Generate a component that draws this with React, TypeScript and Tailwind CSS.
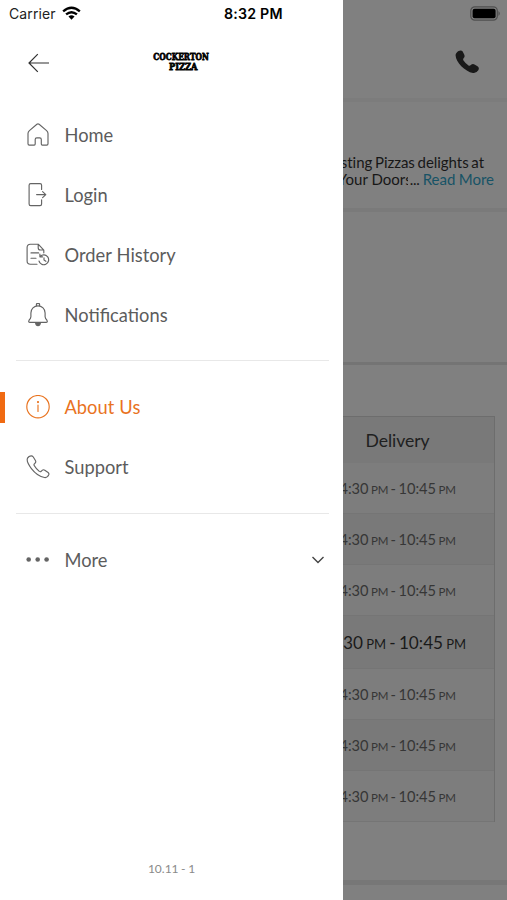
import type { ReactNode } from "react";

function Icon({ children, className = "" }: { children: ReactNode; className?: string }) {
  return (
    <svg
      viewBox="0 0 24 24"
      className={`h-6 w-6 shrink-0 ${className}`}
      fill="none"
      stroke="currentColor"
      strokeWidth="1.15"
      strokeLinecap="round"
      strokeLinejoin="round"
    >
      {children}
    </svg>
  );
}

const HomeIcon = (
  <Icon>
    <path d="M3.4 7.600 10.900 1.300q1.100-.9 2.200 0l7.500 6.300q1.400 1.200 1.400 3V20.800q0 1.300-1.300 1.300H16.300q-1 0-1-1V16.500q0-1.600-1.600-1.600H10.800q-1.600 0-1.600 1.600v4.600q0 1-1 1H3.300Q2 22.100 2 20.800V10.600q0-1.800 1.400-3Z" />
  </Icon>
);
const LoginIcon = (
  <Icon>
    <path d="M15.600 6.500V2.200q0-1.600-1.600-1.600H4.700Q3.100.6 3.100 2.200v18.800q0 1.600 1.600 1.600H14q1.600 0 1.600-1.600v-4.300M10.600 11.600h9M16.600 8.600l3.200 3-3.200 3" />
  </Icon>
);
const OrderIcon = (
  <Icon>
    <path d="M11 21.200H4.400Q1.100 21.200 1.100 17.900V4.500Q1.100 1.200 4.400 1.200h7.800l5.600 6v2.600M12.200 1.200v3.500q0 2.300 2.200 2.300h3.400M5 9.900h7.600M5 15.200h5" />
    <path d="M14.200 13.400a4.900 4.900 0 1 1-1.200 4.600M13.900 11.100v2.700h2.700M18 14.800v2.300l1.900 1.200" />
  </Icon>
);
const BellIcon = (
  <Icon>
    <path d="M10.400 2.700V1.600Q10.400.3 12 .3t1.600 1.300v1.100M4.900 13.700V9.900a7.100 7.100 0 0 1 14.200 0v3.800q.2 1.800 1.700 3.300 1.300 2.300-.8 2.300H4q-2.100 0-.8-2.300 1.500-1.500 1.700-3.300Z" />
    <path d="M9.600 19.900h4.800q-.4 2.700-2.400 2.700t-2.400-2.700Z" fill="currentColor" />
  </Icon>
);
const InfoIcon = (
  <Icon>
    <circle cx="12" cy="11.700" r="11.200" />
    <path d="M12 10v6.500" />
    <circle cx="12" cy="7.100" r=".5" fill="currentColor" />
  </Icon>
);
const SupportIcon = (
  <Icon>
    <path d="M3.100 1.500 1.600 3C-.5 7.100 8.200 20.500 18.500 22.500q1.700.3 2.900-.9l1-1.100q1.200-1.600-.3-3l-3.300-2.300q-1.400-1-2.700.2l-.9.900q-.9.800-1.900.1C10.900 14.300 9.300 12.500 8.200 10.500q-.6-1.100.3-1.800l.5-.5q1.300-1.100.4-2.700L7.300 2q-1.600-2.100-4.200-.5Z" />
  </Icon>
);
const MoreIcon = (
  <Icon>
    <g fill="currentColor" stroke="none">
      <circle cx="2.700" cy="11.500" r="2.300" />
      <circle cx="11.700" cy="11.500" r="2.300" />
      <circle cx="20.600" cy="11.500" r="2.300" />
    </g>
  </Icon>
);

function MenuItem({ icon, label, active, trailing }: { icon: ReactNode; label: string; active?: boolean; trailing?: ReactNode }) {
  return (
    <li className={`flex h-[60px] items-center ${active ? "text-[#e9731f]" : "text-[#5c5c5c]"}`}>
      <span className={`h-[31px] w-[5px] shrink-0 ${active ? "bg-[#f06a12]" : ""}`} />
      <span className={`ml-[21px] flex ${active ? "" : "text-[#646464]"}`}>{icon}</span>
      <span className="ml-[14.5px] text-[18.3px] leading-6 [word-spacing:0.5px]">{label}</span>
      {trailing}
    </li>
  );
}

function Drawer() {
  return (
    <aside className="flex h-full w-[343px] shrink-0 flex-col bg-white">
      <div className="flex h-7 items-center pl-[9px] font-['Inter'] text-[#222]">
        <span className="mb-px w-[48px] text-[14px] leading-[26px] tracking-[0.1px]">Carrier</span>
        <svg viewBox="0 0 20 14" className="mb-[2px] ml-[5px] h-[14px] w-[19px]" fill="none" stroke="#000" strokeWidth="2.500">
          <path d="M1.200 5.200Q10-2.200 18.800 5.200M4.300 8.500q5.700-4.800 11.400 0" />
          <path d="M6.800 10.800Q10 8 13.200 10.800L10 14Z" fill="#000" stroke="none" />
        </svg>
        <span className="mb-px ml-[143px] whitespace-nowrap text-[14.200px] font-semibold tracking-[0.200px] text-black">8:32 PM</span>
      </div>
      <header className="flex h-[77px] pt-[22px]">
        <svg viewBox="0 0 22 20" className="ml-7 mt-[3px] h-5 w-[22px]" fill="none" stroke="#303030" strokeWidth="1.200">
          <path d="M21 10H1M9.800 1.200 1 10l8.800 8.800" />
        </svg>
        <svg viewBox="0 0 60 26" className="-mt-0.5 ml-[101px] h-[26px] w-[60px] overflow-visible font-['DejaVu_Serif']" fontWeight="700" fontSize="9.800" stroke="#000" strokeWidth=".8">
          <text x="2.300" y="11.700" textLength="55.500" lengthAdjust="spacingAndGlyphs">COCKERTON</text>
          <text x="18" y="21.700" textLength="28.500" lengthAdjust="spacingAndGlyphs">PIZZA</text>
        </svg>
      </header>
      <ul>
        <MenuItem icon={HomeIcon} label="Home" />
        <MenuItem icon={LoginIcon} label="Login" />
        <MenuItem icon={OrderIcon} label="Order History" />
        <MenuItem icon={BellIcon} label="Notifications" />
      </ul>
      <hr className="ml-4 mr-[14px] mt-[15px] border-[#e8e8e8]" />
      <ul className="mt-4">
        <MenuItem icon={InfoIcon} label="About Us" active />
        <MenuItem icon={SupportIcon} label="Support" />
      </ul>
      <hr className="ml-4 mr-[14px] mt-4 border-[#e8e8e8]" />
      <ul className="mt-4">
        <MenuItem
          icon={MoreIcon}
          label="More"
          trailing={
            <svg viewBox="0 0 14 8" className="ml-auto mr-[18px] h-2 w-[14px]" fill="none" stroke="#444" strokeWidth="1.400">
              <path d="m1.500 1 5.500 5.500L12.500 1" />
            </svg>
          }
        />
      </ul>
      <footer className="mb-[22px] mt-auto text-center text-[12px] leading-[18px] text-[#8a8a8a] [word-spacing:-0.5px]">10.11 - 1</footer>
    </aside>
  );
}

function Hours({ today, striped }: { today?: boolean; striped?: boolean }) {
  const suffix = today ? "text-[13px]" : "text-[11.5px] tracking-[-0.3px]";
  return (
    <div
      className={`flex items-center justify-center whitespace-nowrap border-b border-[#757575] pt-[2px] ${
        today ? "h-[53px] text-[17.2px] text-[#191919] [word-spacing:-1.2px]" : "h-[51px] text-[14.6px] text-[#363636] [word-spacing:-1.2px]"
      } ${striped ? "bg-[#797979]" : "bg-[#7d7d7d]"}`}
    >
      <span>
        4:30 <span className={suffix}>PM</span> - 10:45 <span className={suffix}>PM</span>
      </span>
    </div>
  );
}

function StorePage() {
  return (
    <main className="flex h-full min-w-0 flex-1 flex-col overflow-hidden bg-[#808080]">
      <div className="flex h-7 items-center justify-end pr-1.5">
        <svg viewBox="0 0 31 15" className="mb-[2px] h-[15px] w-[31px]">
          <rect x=".8" y=".8" width="26.500" height="13.400" rx="4" fill="none" stroke="#4f4f4f" strokeWidth="1.200" />
          <rect x="2.600" y="2.700" width="23" height="9.600" rx="2" fill="#000" />
          <path d="M28.500 5q2.500 2.500 0 5Z" fill="#4b4b4b" />
        </svg>
      </div>
      <div className="flex h-[70px] justify-end pr-7 pt-[22px]">
        <svg viewBox="0 0 24 24" className="h-6 w-6" fill="#191919">
          <path d="M1.400 3C4-.1 6.600.2 7.700 1.600l1.600 3.200q.8 2-.6 3.300-1 1.200-.2 2.500 2.200 3.300 5 4.900 1.300.6 2.300-.4 1.700-1.700 3.700-.7l3 1.800q2.200 1.700.8 4-2.200 3.300-5.300 2.700C9.900 21.600.7 11.800.6 5.400Q.5 4 1.400 3Z" />
        </svg>
      </div>
      <div className="h-1 bg-[#7c7c7c]" />
      <section className="flex h-[106px] flex-col items-end pt-[51px] text-[15px] leading-[18px] text-[#171717]">
        <p className="mr-[23px] whitespace-nowrap tracking-[-0.05px] [word-spacing:-1px]">Tasting Pizzas delights at</p>
        <p className="-mt-px mr-[13px] flex whitespace-nowrap">
          <span className="flex w-[66px] justify-end overflow-hidden">
            <span className="-mr-[4px]">Your Doors</span>
          </span>
          <span className="ml-[2px] tracking-[-0.2px]">...</span>
          <span className="ml-[3px] text-[#175366] [word-spacing:-0.5px]">Read More</span>
        </p>
      </section>
      <div className="h-1 bg-[#7a7a7a]" />
      <section className="h-[150px]" />
      <div className="h-[3px] bg-[#747474]" />
      <section className="h-[515px] pt-[51px]">
        <div className="-ml-[42px] w-[194px] border-r border-t border-[#6d6d6d]">
          <div className="flex h-[46px] items-center justify-center bg-[#797979] pt-[2px] text-[17.6px] tracking-[-0.05px] text-[#202020]">Delivery</div>
          <Hours />
          <Hours striped />
          <Hours />
          <Hours striped today />
          <Hours />
          <Hours striped />
          <Hours />
        </div>
      </section>
      <div className="h-[5px] bg-[#777]" />
    </main>
  );
}

export default function App() {
  return (
    <div className="flex h-[900px] w-[507px] overflow-hidden font-['Lato',sans-serif]">
      <Drawer />
      <StorePage />
    </div>
  );
}
